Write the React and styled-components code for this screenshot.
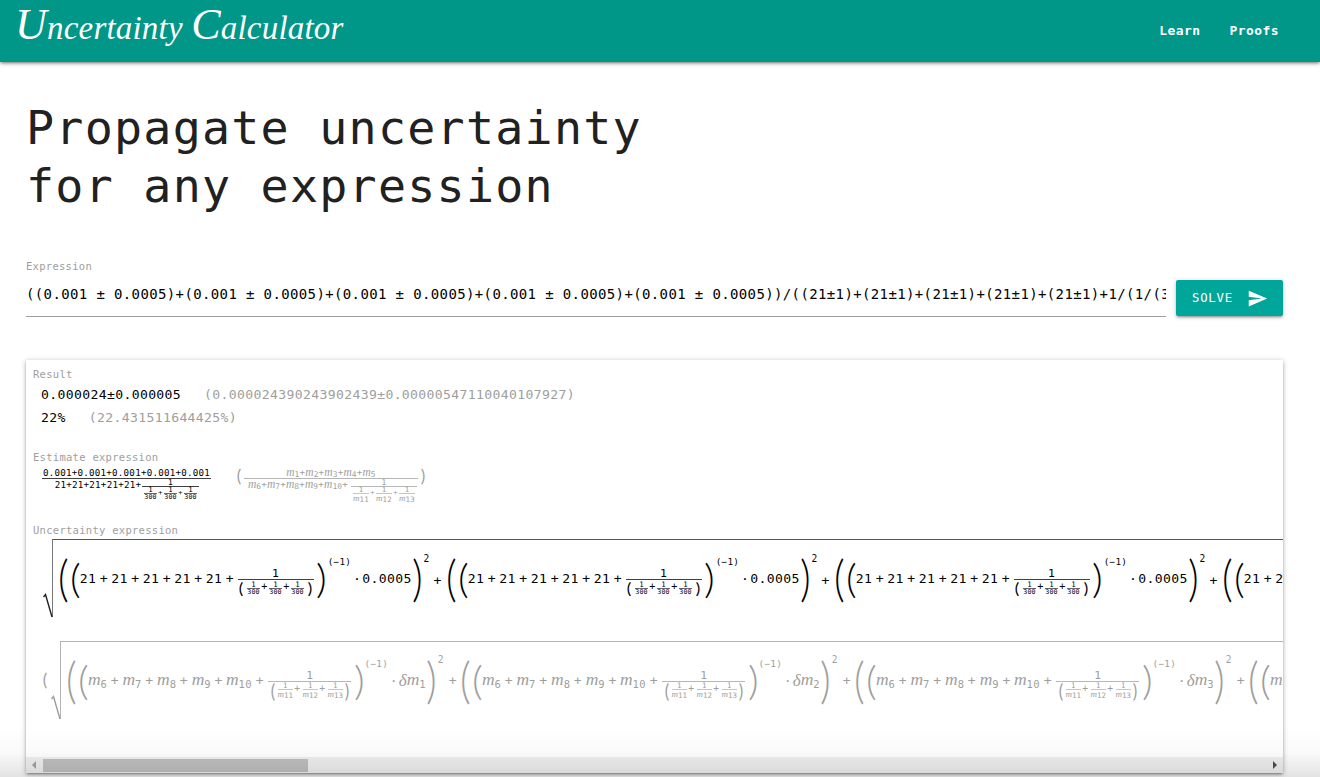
import React from "react";
import styled, { createGlobalStyle, css } from "styled-components";

const mono = (size) => css`
  font-family: "DejaVu Sans Mono", "Liberation Mono", monospace;
  font-size: ${size * 0.875}px;
  letter-spacing: ${size * 0.0232}px;
`;

const GlobalStyle = createGlobalStyle`
  * { box-sizing: border-box; }
  html, body { margin: 0; background: #fff; overflow: hidden; }
  body { ${mono(15)} color: #212121; }
`;

const Page = styled.div`
  height: 777px;
  overflow: hidden;
`;

const NavBar = styled.header`
  display: flex;
  justify-content: space-between;
  align-items: flex-start;
  height: 62px;
  padding: 0 41px 0 15px;
  background: #009688;
  color: #fff;
  box-shadow: 0 2px 2px rgba(0, 0, 0, 0.14), 0 3px 1px -2px rgba(0, 0, 0, 0.12),
    0 1px 5px rgba(0, 0, 0, 0.3);
`;

const Logo = styled.div`
  padding-top: 1px;
  font: italic 33px/48px "Liberation Serif", serif;
  letter-spacing: 0.2px;
  white-space: nowrap;
`;

const LogoCap = styled.span`
  font-size: 44px;
`;

const NavLinks = styled.nav`
  display: flex;
  gap: 29px;
  line-height: 61px;
`;

const NavLink = styled.a`
  ${mono(14.8)}
  font-weight: bold;
  letter-spacing: 0.46px;
`;

const Main = styled.main`
  padding: 37px 36px 0 26px;
`;

const Title = styled.h1`
  margin: 0;
  ${mono(53.33)}
  font-weight: 400;
  line-height: 58px;
  white-space: pre-line;
`;

const Label = styled.div`
  ${mono(12)}
  line-height: 16px;
  color: #9e9e9e;
  white-space: nowrap;
`;

const FormRow = styled.div`
  display: flex;
  gap: 10px;
  height: 59px;
  margin-top: 43px;
`;

const Field = styled.div`
  width: 1140px;
`;

const Input = styled.div`
  ${mono(16)}
  height: 43px;
  line-height: 40px;
  border-bottom: 1px solid #9e9e9e;
  color: #000;
  white-space: pre;
  overflow: hidden;
`;

const SolveButton = styled.button`
  display: flex;
  align-items: center;
  justify-content: space-between;
  width: 107px;
  height: 36px;
  margin: 22px 0 0;
  padding: 0 15px 0 16px;
  border: 0;
  border-radius: 2px;
  background: #00a699;
  color: #fff;
  ${mono(14)}
  letter-spacing: 0.8px;
  box-shadow: 0 2px 2px rgba(0, 0, 0, 0.14), 0 3px 1px -2px rgba(0, 0, 0, 0.12),
    0 1px 5px rgba(0, 0, 0, 0.2);
`;

const Panel = styled.section`
  display: flex;
  flex-direction: column;
  width: 1257px;
  height: 413px;
  margin-top: 43px;
  padding-top: 6px;
  background: #fff;
  overflow: hidden;
`;

const PanelShadow = styled.div`
  width: 1257px;
  box-shadow: 0 2px 2px rgba(0, 0, 0, 0.14), 0 3px 1px -2px rgba(0, 0, 0, 0.12),
    0 1px 5px rgba(0, 0, 0, 0.3);
`;

const Section = styled.div`
  height: ${(p) => p.$h}px;
  padding-left: 7px;
  flex: none;
`;

const ResultLines = styled.div`
  padding: 1px 0 0 8px;
`;

const ResultLine = styled.div`
  display: flex;
  gap: 23px;
  line-height: 23px;
  color: #000;
  white-space: nowrap;
`;

const Muted = styled.span`
  color: #9e9e9e;
`;

const MathRow = styled.div`
  display: flex;
  align-items: flex-start;
  width: max-content;
  height: ${(p) => p.$h}px;
  margin-top: ${(p) => p.$top || 0}px;
  color: ${(p) => (p.$muted ? "#9e9e9e" : "#000")};
  white-space: nowrap;
`;

/* A horizontal slot of the formula, centred on a chosen line. */
const Slot = styled.span`
  display: flex;
  flex: none;
  justify-content: ${(p) => p.$align || "center"};
  align-items: center;
  width: ${(p) => p.$w}px;
  height: ${(p) => p.$h || 16}px;
  margin-top: ${(p) => p.$top || 0}px;
  ${(p) => mono(p.$size || 15)}
  line-height: 1;
`;

const Delimiter = styled.span`
  flex: none;
  display: flex;
  justify-content: center;
  align-items: center;
  width: ${(p) => p.$w}px;
  height: ${(p) => p.$h}px;
  margin-top: ${(p) => p.$top || 0}px;
`;

const DelimiterGlyph = styled.span`
  font: ${(p) => (p.$f > 20 ? 300 : 400)} ${(p) => p.$f}px/1 Lato, "Liberation Serif", serif;
  letter-spacing: 0;
  transform: translateY(-0.1em) scale(${(p) => p.$x}, ${(p) => p.$h / (0.92 * p.$f)});
`;

const Stack = styled.span`
  flex: none;
  display: flex;
  flex-direction: column;
  align-items: center;
  width: ${(p) => p.$w}px;
  margin-top: ${(p) => p.$top || 0}px;
`;

const Line = styled.span`
  display: flex;
  align-items: flex-start;
  justify-content: center;
  width: 100%;
  height: ${(p) => p.$h}px;
  ${(p) => mono(p.$size)}
  line-height: ${(p) => p.$h}px;
  white-space: nowrap;
`;

const Bar = styled.span`
  flex: none;
  width: 100%;
  height: 1px;
  background: currentColor;
  opacity: ${(p) => p.$o || 0.75};
`;

const Variable = styled.i`
  font: italic ${(p) => p.$size}px/1 "Liberation Serif", serif;
  letter-spacing: 0;
`;

const Index = styled.span`
  ${(p) => mono(p.$size)}
  line-height: 1;
  transform: translateY(${(p) => p.$drop}px);
`;

const RadicalBody = styled.span`
  display: flex;
  align-items: flex-start;
  height: 78px;
  border-top: 1px solid ${(p) => (p.$muted ? "#b4b4b4" : "#555")};
`;

const Product = styled.span`
  display: flex;
  align-items: flex-start;
  flex: none;
  width: ${(p) => p.$w}px;
`;

const ScrollBar = styled.div`
  display: flex;
  align-items: center;
  justify-content: space-between;
  flex: none;
  height: 16px;
  margin-top: auto;
  padding: 0 6px 0 6px;
  background: #f1f1f1;
`;

const Thumb = styled.div`
  width: 265px;
  height: 13px;
  margin: 1px auto 0 7px;
  background: #c1c1c1;
`;

const BottomShade = styled.div`
  position: fixed;
  left: 0;
  right: 0;
  bottom: 0;
  height: 50px;
  background: linear-gradient(
    rgba(0, 0, 0, 0) 0%,
    rgba(0, 0, 0, 0.02) 50%,
    rgba(0, 0, 0, 0.11) 100%
  );
  pointer-events: none;
`;

const Paren = ({ c, w, h, top }) => (
  <Delimiter $w={w} $h={h} $top={top}>
    <DelimiterGlyph $f={h > 20 ? 26 : 14} $x={h > 20 ? 1.6 : 1.2} $h={h}>{c}</DelimiterGlyph>
  </Delimiter>
);

const M = ({ i, size = 17.5, sub = 12, drop = 4 }) => (
  <>
    <Variable $size={size}>m</Variable>
    <Index $size={sub} $drop={drop}>{i}</Index>
  </>
);

const RadicalSign = ({ muted }) => (
  <svg width="10" height="79" viewBox="0 0 10 79" fill="none">
    <path d="M9.5 0V78" stroke={muted ? "#b4b4b4" : "#777"} />
    <path d="M0.5 58L2.5 55.500L9 78" stroke={muted ? "#9e9e9e" : "#222"} strokeWidth="1.4" />
  </svg>
);

const SmallFraction = ({ w, children, size = 7.6, top = 0 }) => (
  <Stack $w={w} $top={top}>
    <Line $h={6} $size={8.5}>1</Line>
    <Bar $o={0.6} />
    <Line $h={7} $size={size}>{children}</Line>
  </Stack>
);

const NumberTerm = () => (
  <Product $w={388}>
    <Paren c="(" w={9} h={45} top={17} />
    <Slot $w={3} />
    <Paren c="(" w={8} h={37} top={21} />
    <Slot $w={0.5} />
    {[0, 1, 2, 3, 4].map((k) => (
      <React.Fragment key={k}>
        <Slot $w={17} $top={31}>21</Slot>
        <Slot $w={14.5} $top={31}>+</Slot>
      </React.Fragment>
    ))}
    <Slot $w={0.5} />
    <Stack $w={76} $top={28}>
      <Line $h={11} $size={13}>1</Line>
      <Bar />
      <Line $h={19} $size={11}>
        <Paren c="(" w={6} h={14} top={3} />
        <Slot $w={3} />
        <SmallFraction w={13} top={2}>300</SmallFraction>
        <Slot $w={9} $h={15} $size={11.5}>+</Slot>
        <SmallFraction w={13} top={2}>300</SmallFraction>
        <Slot $w={9} $h={15} $size={11.5}>+</Slot>
        <SmallFraction w={13} top={2}>300</SmallFraction>
        <Slot $w={3} />
        <Paren c=")" w={6} h={14} top={3} />
      </Line>
    </Stack>
    <Slot $w={3} />
    <Paren c=")" w={9} h={37} top={21} />
    <Slot $w={1} />
    <Slot $w={26} $h={12} $top={16} $size={10.7}>(−1)</Slot>
    <Slot $w={9} $top={31}>·</Slot>
    <Slot $w={51} $top={31}>0.0005</Slot>
    <Paren c=")" w={9} h={45} top={17} />
    <Slot $w={10} $h={10} $top={14} $size={11}>2</Slot>
    <Slot $w={12} $top={33}>+</Slot>
  </Product>
);

const SymbolTerm = ({ n }) => (
  <Product $w={394}>
    <Paren c="(" w={9} h={45} top={17} />
    <Slot $w={3} />
    <Paren c="(" w={8} h={37} top={21} />
    <Slot $w={0.5} />
    {[6, 7, 8, 9, 10].map((k) => (
      <React.Fragment key={k}>
        <Slot $w={k === 10 ? 26 : 20} $top={30}><M i={k} /></Slot>
        <Slot $w={k === 10 ? 16 : 14.600} $top={31}>+</Slot>
      </React.Fragment>
    ))}
    <Slot $w={0.5} />
    <Stack $w={83} $top={28}>
      <Line $h={11} $size={13}>1</Line>
      <Bar />
      <Line $h={19} $size={11}>
        <Paren c="(" w={7} h={18} top={1} />
        {[11, 12, 13].map((k) => (
          <React.Fragment key={k}>
            <Slot $w={1} />
            <SmallFraction w={15.500} top={1}><M i={k} size={9} sub={8.5} drop={2} /></SmallFraction>
            {k < 13 && <Slot $w={8.500} $h={13} $size={11}>+</Slot>}
          </React.Fragment>
        ))}
        <Paren c=")" w={7} h={18} top={1} />
      </Line>
    </Stack>
    <Slot $w={3} />
    <Paren c=")" w={9} h={37} top={21} />
    <Slot $w={26} $h={12} $top={16} $size={10.7}>(−1)</Slot>
    <Slot $w={9} $top={31}>·</Slot>
    <Slot $w={28} $top={30}>
      <Variable $size={17}>δ</Variable>
      <M i={n} />
    </Slot>
    <Paren c=")" w={9} h={45} top={17} />
    <Slot $w={11} $h={10} $top={13} $size={11}>2</Slot>
    <Slot $w={13} $top={31}>+</Slot>
  </Product>
);

const sum = (from, to) => {
  const items = [];
  for (let k = from; k <= to; k++) {
    if (k > from) items.push(<span key={`p${k}`}>+</span>);
    items.push(<M key={k} i={k} size={11.5} sub={9} drop={2} />);
  }
  return items;
};

const Estimate = () => (
  <MathRow $h={34} $top={3}>
    <Slot $w={9} />
    <Stack $w={169}>
      <Line $h={10} $size={10.5}>0.001+0.001+0.001+0.001+0.001</Line>
      <Bar />
      <Line $h={22} $size={10.5}>
        <Slot $w={88} $h={11} $size={10.5}>21+21+21+21+21+</Slot>
        <Stack $w={57}>
          <Line $h={7} $size={9}>1</Line>
          <Bar />
          <Line $h={14} $size={7}>
            {[0, 1, 2].map((k) => (
              <React.Fragment key={k}>
                <SmallFraction w={13}>300</SmallFraction>
                {k < 2 && <Slot $w={7} $h={12} $size={8}>+</Slot>}
              </React.Fragment>
            ))}
          </Line>
        </Stack>
      </Line>
    </Stack>
  </MathRow>
);

const SymbolEstimate = () => (
  <MathRow $h={34} $top={3} $muted>
    <Slot $w={25} />
    <Paren c="(" w={6} h={15} top={2} />
    <Slot $w={2} />
    <Stack $w={174}>
      <Slot $w={100} $h={10} $size={10.5}>{sum(1, 5)}</Slot>
      <Bar />
      <Line $h={22} $size={10.5}>
        <Slot $w={106} $h={11} $size={10.5}>{sum(6, 10)}+</Slot>
        <Stack $w={66}>
          <Line $h={7} $size={9}>1</Line>
          <Bar />
          <Line $h={14} $size={7}>
            {[11, 12, 13].map((k) => (
              <React.Fragment key={k}>
                <SmallFraction w={16}><M i={k} size={9} sub={8.5} drop={2} /></SmallFraction>
                {k < 13 && <Slot $w={7} $h={12} $size={8}>+</Slot>}
              </React.Fragment>
            ))}
          </Line>
        </Stack>
      </Line>
    </Stack>
    <Slot $w={2} />
    <Paren c=")" w={6} h={15} top={2} />
  </MathRow>
);

const EstimateRow = styled.div`
  display: flex;
`;

const expression =
  "((0.001 ± 0.0005)+(0.001 ± 0.0005)+(0.001 ± 0.0005)+(0.001 ± 0.0005)+(0.001 ± 0.0005))/((21±1)+(21±1)+(21±1)+(21±1)+(21±1)+1/(1/(300±1)+1/(300±1)+1/(300±1)))";

export default function App() {
  return (
    <Page>
      <GlobalStyle />
      <NavBar>
        <Logo>
          <LogoCap>U</LogoCap>ncertainty <LogoCap>C</LogoCap>alculator
        </Logo>
        <NavLinks>
          <NavLink>Learn</NavLink>
          <NavLink>Proofs</NavLink>
        </NavLinks>
      </NavBar>
      <Main>
        <Title>{"Propagate uncertainty\nfor any expression"}</Title>
        <FormRow>
          <Field>
            <Label>Expression</Label>
            <Input>{expression}</Input>
          </Field>
          <SolveButton>
            SOLVE
            <svg width="21" height="21" viewBox="0 0 24 24" fill="#fff">
              <path d="M2.01 21L23 12 2.01 3 2 10l15 2-15 2z" />
            </svg>
          </SolveButton>
        </FormRow>
        <PanelShadow>
          <Panel>
            <Section $h={83}>
              <Label>Result</Label>
              <ResultLines>
                <ResultLine>
                  0.000024±0.000005
                  <Muted>(0.000024390243902439±0.00000547110040107927)</Muted>
                </ResultLine>
                <ResultLine>
                  22%
                  <Muted>(22.431511644425%)</Muted>
                </ResultLine>
              </ResultLines>
            </Section>
            <Section $h={73}>
              <Label>Estimate expression</Label>
              <EstimateRow>
                <Estimate />
                <SymbolEstimate />
              </EstimateRow>
            </Section>
            <Section $h={230}>
              <Label>Uncertainty expression</Label>
              <MathRow $h={102} $top={1}>
                <Slot $w={10} />
                <RadicalSign />
                <RadicalBody>
                  <Slot $w={6} />
                  {[0, 1, 2, 3].map((k) => <NumberTerm key={k} />)}
                </RadicalBody>
              </MathRow>
              <MathRow $h={90} $muted>
                <Slot $w={9} />
                <Paren c="(" w={6} h={15} top={33} />
                <Slot $w={3} />
                <RadicalSign muted />
                <RadicalBody $muted>
                  <Slot $w={6} />
                  {[1, 2, 3, 4].map((n) => <SymbolTerm key={n} n={n} />)}
                </RadicalBody>
              </MathRow>
            </Section>
            <ScrollBar>
              <svg width="4" height="8" viewBox="0 0 4 8"><path d="M4 0v8L0 4z" fill="#a3a3a3" /></svg>
              <Thumb />
              <svg width="4" height="8" viewBox="0 0 4 8"><path d="M0 0v8l4-4z" fill="#505050" /></svg>
            </ScrollBar>
          </Panel>
        </PanelShadow>
      </Main>
      <BottomShade />
    </Page>
  );
}
